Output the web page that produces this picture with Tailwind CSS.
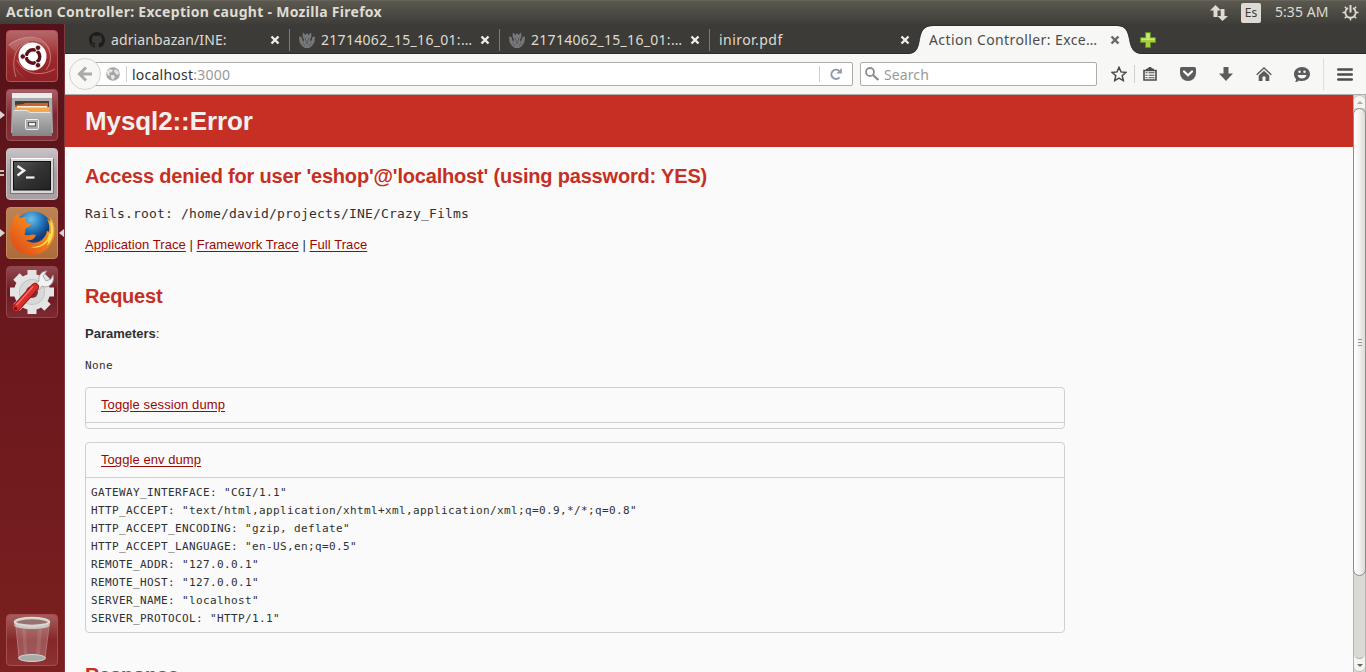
<!DOCTYPE html>
<html lang="en">
<head>
<meta charset="utf-8">
<title>Action Controller: Exception caught</title>
<script src="https://cdn.jsdelivr.net/npm/@tailwindcss/browser@4"></script>
</head>
<body class="w-[1366px] h-[672px] overflow-hidden flex flex-col bg-[#3c3b37] font-['Noto_Sans',sans-serif]">

<svg class="hidden">
  <defs>
    <symbol id="close" viewBox="0 0 10 10"><path d="M1.500 1.500l7 7M8.500 1.500l-7 7" stroke="currentColor" stroke-width="2.400" fill="none"/></symbol>
    <symbol id="flame" viewBox="0 0 16 16"><path d="M4 .5l2.500 2.500L8 1l1.500 2L12 .5 12.500 4 11 8l1 2 1.500-5L16 4.500 15.500 10 13 14l-3 2H6l-3-2L.5 10 0 4.500 2.500 5 4 10l1-2-1.500-4z" fill="#77787a"/><path d="M6 6l2 6 2-6M3.500 11l3 3M12.500 11l-3 3" stroke="#5a5b5e" fill="none"/></symbol>
  </defs>
</svg>

<header class="h-6 shrink-0 flex items-center justify-between pl-1.5 pr-[7px] bg-linear-to-b from-[#5b594f] to-[#3e3d39] border-t border-[#66645a] text-[#dfdbd2]">
  <div class="text-[14px] leading-[22px] -mt-0.5 font-bold tracking-[0.29px] whitespace-nowrap">Action Controller: Exception caught - Mozilla Firefox</div>
  <div class="flex items-center">
    <svg class="w-[18px] h-[18px] mr-[13px]" viewBox="0 0 18 18" fill="#dfdbd2"><path d="M5.500 1L11 6.500H7.500V13h-4V6.500H0zM12.500 17L7.500 12h3.200V5h3.800v7H18z"/></svg>
    <div class="w-5 h-5 rounded-[2px] bg-[#dfdbd2] text-[#3c3b37] text-[12px] leading-5 text-center mr-[14px]">Es</div>
    <div class="text-[14px] leading-[22px] -mt-0.5 tracking-[0.05px] w-[54px] mr-[13px] whitespace-nowrap">5:35 AM</div>
    <svg class="w-[17px] h-[17px]" viewBox="0 0 17 17" fill="none" stroke="#dfdbd2"><path d="M6 4a5.200 5.200 0 1 0 5 0" stroke-width="1.800"/><path d="M8.500 1v7.500" stroke-width="2"/><path d="M.5 8.500h3M13.500 8.500h3M2.800 14.200l2-2M14.200 14.200l-2-2M8.500 16.500v-3M2.800 2.800l2 2M14.200 2.800l-2 2" stroke-width="1.500"/></svg>
  </div>
</header>

<div class="flex flex-1 min-h-0">
  <aside class="w-[65px] shrink-0 flex flex-col gap-[7px] pt-1.5 pb-[6px] pl-1.5 bg-linear-to-b from-[#55121a] via-[#6b181c] to-[#7b2020] border-r border-[#7e3a3f]">
    <div class="relative w-[52px] h-[52px] rounded-[4px] border border-[#b0565a] bg-linear-to-b from-[#b4686b] via-[#a02a2c] to-[#8e2226]">
      <svg class="w-[50px] h-[50px]" viewBox="0 0 50 50" fill="none"><path d="M1 14C12 4 34 4 41 16c4 8 3 16-1 22 8-14 0-28-14-28C14 10 6 18 7 30c1 12 8 16 14 19C10 43 4 30 8 20z" fill="#fff" opacity=".17"/><path d="M2 14C16 3 36 3 42 18c3 9 1 16-3 21M9 46C4 32 7 14 22 11M48 38c-16 9-33 4-38-9" stroke="#e0a8a8" opacity=".6"/><circle cx="25.500" cy="25.500" r="14" fill="#fff"/><circle cx="26" cy="25.500" r="6.800" stroke="#5e1219" stroke-width="3.400"/><path d="M26 25.500h-11M26 25.500l5.500-9.500M26 25.500l5.500 9.500" stroke="#fff" stroke-width="1"/><g fill="#5e1219" stroke="#fff" stroke-width=".8"><circle cx="15.800" cy="25.500" r="2.700"/><circle cx="31" cy="16.800" r="2.700"/><circle cx="31" cy="34.200" r="2.700"/></g></svg>
    </div>
    <div class="relative w-[52px] h-[52px] rounded-[4px] border border-[#9c5157] bg-linear-to-b from-[#aa6068] via-[#7c2630] to-[#82313b]">
      <svg class="w-[50px] h-[50px]" viewBox="0 0 50 50"><defs><linearGradient id="cab" x2="0" y2="1"><stop stop-color="#bdbdbd"/><stop offset="1" stop-color="#858585"/></linearGradient></defs><path d="M5 3h40v4l1 36H4L5 7z" fill="#ababab"/><path d="M5 3h40v5H5z" fill="#ececec"/><path d="M8 11h34v14H8z" fill="#4a3b35"/><path d="M8 15l8-1 2-1h23v12H8z" fill="#c9642e"/><path d="M8 17h34v6H8z" fill="#f2a94e"/><path d="M10 16h30v1.500H10z" fill="#fff3df"/><path d="M6 20h14l3 2h21l1 24H5z" fill="url(#cab)"/><path d="M7 20.500h13l3 2h20" stroke="#e4e4e4" fill="none"/><rect x="18.500" y="29.500" width="13" height="10" rx="1" fill="#aaa" stroke="#f0f0f0"/><rect x="21.500" y="32.500" width="7" height="3.500" fill="#f4f4f4" stroke="#555"/></svg>
      <i class="absolute -left-[7px] top-[21px] border-y-4 border-y-transparent border-l-[5px] border-l-[#ddd3d3]"></i>
    </div>
    <div class="relative w-[52px] h-[52px] rounded-[4px] border border-[#c8bfc1] bg-linear-to-b from-[#c9c3c5] via-[#a79ea2] to-[#aaa0a4]">
      <svg class="w-[50px] h-[50px]" viewBox="0 0 50 50"><defs><linearGradient id="term" x2="1" y2="1"><stop stop-color="#555"/><stop offset=".5" stop-color="#333"/><stop offset="1" stop-color="#222"/></linearGradient></defs><path d="M3.500 9.500h43v35h-43z" fill="#d8d8d8" stroke="#777"/><path d="M4 9.500h42" stroke="#fff"/><rect x="6.500" y="12.500" width="37" height="28.500" fill="url(#term)" stroke="#111"/><path d="M10.500 17l6.500 4.500-6.500 5" stroke="#f2f2f2" stroke-width="2.500" fill="none"/><path d="M19 28.500h8.500" stroke="#f2f2f2" stroke-width="2.200"/></svg>
      <i class="absolute -left-[7px] top-[21px] w-[4px] h-[6px] border-y-2 border-[#cbbcbc]"></i>
    </div>
    <div class="relative w-[52px] h-[52px] rounded-[4px] border border-[#c58a60] bg-linear-to-b from-[#bd8354] to-[#ad6b3a]">
      <svg class="w-[50px] h-[50px]" viewBox="0 0 50 50"><defs><radialGradient id="globe" cx=".45" cy=".2"><stop stop-color="#6bc1ea"/><stop offset=".6" stop-color="#2173b8"/><stop offset="1" stop-color="#123d7c"/></radialGradient><linearGradient id="fox" x1="1" y1="0" x2="0" y2="1"><stop stop-color="#ffd53d"/><stop offset=".35" stop-color="#f58a1f"/><stop offset="1" stop-color="#dc4216"/></linearGradient></defs><circle cx="26" cy="23" r="19.500" fill="url(#globe)"/><path d="M6 12c2-4 4-6 5-7 0 3 1 4 2 5 2-1 5-1 7-1-2 2-2 4 0 6l4 1c-1 3-5 3-6 6 1 2 0 4-1 4 4 3 7-1 12 1-2 5-6 6-10 5 7 6 19 2 21-9 1 0 2 1 2 1 1-5 0-10-2-13 3 2 4 4 5 6 0-3-1-6-3-9 6 6 6 16 5 21-3 11-12 18-22 18C11 47 3 38 3 26c0-6 1-10 3-14z" fill="url(#fox)"/><path d="M43 11c5 8 4 20-3 27 1-3 1-5 1-5-5 6-12 8-17 6 11 0 17-6 18-14l2 1c0-6 0-11-1-15z" fill="#ffe052"/></svg>
      <i class="absolute -left-[7px] top-[21px] border-y-4 border-y-transparent border-l-[5px] border-l-[#ddd3d3]"></i>
      <i class="absolute -right-[7px] top-[21px] border-y-4 border-y-transparent border-r-[5px] border-r-[#ddd3d3]"></i>
    </div>
    <div class="relative w-[52px] h-[52px] rounded-[4px] border border-[#92454b] bg-linear-to-b from-[#91484f] via-[#6b1820] to-[#7b2a33]">
      <svg class="w-[50px] h-[50px]" viewBox="0 0 50 50"><g transform="translate(25 25)"><g fill="#e4e4e4"><g id="teeth"><rect x="-4.500" y="-22" width="9" height="44"/><rect x="-22" y="-4.500" width="44" height="9"/></g><use href="#teeth" transform="rotate(45)"/><circle r="18"/></g><circle r="13" fill="#c4c4c4"/><circle r="12" fill="#d8d8d8"/><circle r="6" fill="#7b2e34"/></g><path d="M28 17l4-3c-1-6 3-10 8-10l-4 5 3 5 5-2 2-4c2 6-2 12-8 12l-3-1-3 4z" fill="#f2f2f2" stroke="#999" stroke-width=".8"/><path d="M9 41L28 20" stroke="#9e1414" stroke-width="8" stroke-linecap="round"/><path d="M9 41L28 20" stroke="#d8302a" stroke-width="6.200" stroke-linecap="round"/><path d="M9.500 38L26 19.500" stroke="#f0716a" stroke-width="1.500"/><circle cx="8.500" cy="41.500" r="1.800" fill="#7d1010"/></svg>
    </div>
    <div class="mt-auto w-[52px] h-[52px] rounded-[4px] border border-[#a2504f] bg-linear-to-b from-[#a75b5b] via-[#842729] to-[#8d3232]">
      <svg class="w-[50px] h-[50px]" viewBox="0 0 50 50"><path d="M9 9l3 34c5 4 21 4 26 0l4-34z" fill="#fff" opacity=".2"/><path d="M9 12l3 31M42 12l-4 31" stroke="#c99" opacity=".6"/><path d="M15 13l2 26h3l-1-26M31 13l-2 26h4l2-26" fill="#fff" opacity=".1"/><ellipse cx="25" cy="43" rx="13.500" ry="3.500" fill="#a7aaa6" stroke="#d7d7d7"/><ellipse cx="25" cy="7" rx="17" ry="4" fill="#9a7171" stroke="#d9d9d3" stroke-width="2.500"/><path d="M7 8c2 5 34 5 36 0l-.5 3c-3 4-32 4-35 0z" fill="#c9c9c3"/></svg>
    </div>
  </aside>

  <main class="flex-1 min-w-0 flex flex-col bg-[#f7f7f5]">
    <nav class="relative h-[30px] shrink-0 flex pl-[14px] bg-[#3c3b37] border-b border-[#2c2b28] text-[14px] text-[#dfdbd2]">
      <div class="w-[210px] h-full flex items-center pt-0.5 pl-[10px] pr-[9px]">
        <svg class="w-4 h-4 mr-1.5" viewBox="0 0 16 16" fill="#1d1d1d"><path d="M8 0C3.580 0 0 3.580 0 8c0 3.540 2.290 6.530 5.470 7.590.4.070.55-.17.55-.38 0-.19-.01-.82-.01-1.490-2.010.37-2.530-.49-2.690-.94-.09-.23-.48-.94-.82-1.130-.28-.15-.68-.52-.01-.53.63-.01 1.080.58 1.230.82.72 1.210 1.870.87 2.330.66.07-.52.28-.87.51-1.070-1.780-.2-3.640-.89-3.640-3.950 0-.87.31-1.590.82-2.150-.08-.2-.36-1.020.08-2.120 0 0 .67-.21 2.200.82.64-.18 1.320-.27 2-.27s1.360.09 2 .27c1.530-1.040 2.200-.82 2.200-.82.44 1.100.16 1.920.08 2.120.51.56.82 1.270.82 2.150 0 3.070-1.870 3.750-3.650 3.950.29.25.54.73.54 1.480 0 1.070-.01 1.930-.01 2.200 0 .21.15.46.55.38A8.010 8.010 0 0 0 16 8c0-4.420-3.580-8-8-8z"/></svg>
        <span class="flex-1 whitespace-nowrap tracking-[0.1px]">adrianbazan/INE:</span>
        <svg class="w-2.5 h-2.5 text-[#f0eee8]"><use href="#close"/></svg>
      </div>
      <div class="w-px h-[22px] mt-[5px] bg-[#7d7b76]"></div>
      <div class="w-[209px] h-full flex items-center pt-0.5 pl-[9px] pr-[9px]">
        <svg class="w-4 h-4 mr-1.5"><use href="#flame"/></svg>
        <span class="flex-1 whitespace-nowrap tracking-[0.3px]">21714062_15_16_01:…</span>
        <svg class="w-2.5 h-2.5 text-[#f0eee8]"><use href="#close"/></svg>
      </div>
      <div class="w-px h-[22px] mt-[5px] bg-[#7d7b76]"></div>
      <div class="w-[209px] h-full flex items-center pt-0.5 pl-[9px] pr-[9px]">
        <svg class="w-4 h-4 mr-1.5"><use href="#flame"/></svg>
        <span class="flex-1 whitespace-nowrap tracking-[0.3px]">21714062_15_16_01:…</span>
        <svg class="w-2.5 h-2.5 text-[#f0eee8]"><use href="#close"/></svg>
      </div>
      <div class="w-px h-[22px] mt-[5px] bg-[#7d7b76]"></div>
      <div class="w-[209px] h-full flex items-center pt-0.5 pl-[9px] pr-[9px]">
        <span class="flex-1 whitespace-nowrap tracking-[0.45px]">iniror.pdf</span>
        <svg class="w-2.5 h-2.5 text-[#f0eee8]"><use href="#close"/></svg>
      </div>
      <div class="relative w-[210px] h-full flex items-center pt-0.5 pl-[10px] pr-[9px] text-[#4c4c4c]">
        <svg class="absolute -left-[12px] top-0 w-[236px] h-[30px]" viewBox="0 0 236 30"><path d="M0 30c10 0 11-6 12.500-14S16 2 26 2h184c9 0 11 6 12.500 14S226 30 236 30z" fill="#f7f7f5" /><path d="M0 29.500c10 0 11-6 12.500-14S16 1.500 26 1.500h184c9 0 11 6 12.500 14S226 29.500 236 29.500" fill="none" stroke="#2c2b28" stroke-width=".8"/></svg>
        <span class="relative flex-1 whitespace-nowrap tracking-[0.4px]">Action Controller: Exce…</span>
        <svg class="relative w-2.5 h-2.5 text-[#666]"><use href="#close"/></svg>
      </div>
      <svg class="w-4 h-4 ml-[11px] mt-2" viewBox="0 0 16 16"><path d="M5.500.5h5v5h5v5h-5v5h-5v-5h-5v-5h5z" fill="#a9d03c" stroke="#5f9022"/><path d="M6.500 1.500h3v5h5v1.500h-13V6.500h5z" fill="#cbe67a"/></svg>
    </nav>

    <div class="h-[41px] shrink-0 flex items-center pl-1 border-b border-[#b0aea8] text-[14px] text-[#555]">
      <div class="relative z-10 w-8 h-8 rounded-full border border-[#d4d3cf] bg-[#f7f7f5] flex items-center justify-center shrink-0">
        <svg class="w-4 h-4" viewBox="0 0 16 16" fill="none" stroke="#aaaaa7" stroke-width="3"><path d="M9 1.500L2.500 8 9 14.500M3 8h12"/></svg>
      </div>
      <div class="w-[768px] h-6 -ml-4 flex items-center pl-[20px] bg-white border border-[#aeada7] rounded-[2px] shrink-0">
        <svg class="w-[14px] h-[14px]" viewBox="0 0 14 14"><circle cx="7" cy="7" r="6.800" fill="#a4a4a2"/><path d="M1 4l3-2 3 1-1 2-3 1 1 2-1 1-2-2zM9 2l3 2 1 3-2 1-2-2-1-2zM5 8l3 0 1 2-2 3-2-2z" fill="#e4e4e2"/></svg>
        <div class="w-px h-4 ml-[6px] mr-[5px] bg-[#cfcfcf]"></div>
        <div class="flex-1 text-[#999] whitespace-nowrap tracking-[0.24px]"><span class="text-[#333]">localhost</span>:3000</div>
        <div class="w-px h-4 bg-[#cfcfcf]"></div>
        <svg class="w-3 h-3 ml-[10px] mr-[10px]" viewBox="0 0 12 12"><path d="M9.500 9.300A4.600 4.600 0 1 1 9 2.800" fill="none" stroke="#8c99a7" stroke-width="2"/><path d="M11.800 0v5.500H6.300z" fill="#8c99a7"/></svg>
      </div>
      <div class="w-[237px] h-6 ml-[7px] flex items-center pl-1 bg-white border border-[#aeada7] rounded-[2px] shrink-0">
        <svg class="w-[14px] h-[14px] mr-[5px]" viewBox="0 0 14 14" fill="none" stroke="#8f8f8d"><circle cx="5" cy="5" r="4" stroke-width="1.800"/><path d="M8 8l5.300 5" stroke-width="2.300"/></svg>
        <span class="text-[#999] tracking-[0.1px]">Search</span>
      </div>
      <svg class="w-4 h-4 ml-[14px]" viewBox="0 0 16 16"><path d="M8 1.400l2 4.500 4.900.5-3.700 3.300 1.100 4.900L8 12.100l-4.300 2.500 1.100-4.900L1.100 6.400 6 5.900z" fill="none" stroke="#4c4c4c" stroke-width="1.500"/></svg>
      <div class="w-px h-[18px] ml-[7px] bg-[#d0d0ce]"></div>
      <svg class="w-[14px] h-[14px] ml-[8px]" viewBox="0 0 14 14"><path d="M1 3.500h12v9.500H1z" fill="#f7f7f5" stroke="#4c4c4c" stroke-width="1.600"/><path d="M3.500 3.500V2H5l1-1.500h2L9 2h1.500v1.500z" fill="#4c4c4c" stroke="#4c4c4c"/><path d="M2.500 5.800h2M2.500 8.300h2M2.500 10.800h2M5.500 5.800h6M5.500 8.300h6M5.500 10.800h6" stroke="#4c4c4c" stroke-width="1.100"/></svg>
      <svg class="w-4 h-[14px] ml-[23px]" viewBox="0 0 16 14"><path d="M1.500 0h13Q16 0 16 1.500V6a8 8 0 0 1-16 0V1.500Q0 0 1.500 0z" fill="#5c5c5c"/><path d="M4 4.500l4 3.800 4-3.800" fill="none" stroke="#fff" stroke-width="2.200" stroke-linecap="round"/></svg>
      <svg class="w-[14px] h-[14px] ml-[23px]" viewBox="0 0 14 14"><path d="M4.500 0h5v6.500H14l-7 7.500-7-7.500h4.500z" fill="#5c5c5c"/></svg>
      <svg class="w-4 h-[14px] ml-[23px]" viewBox="0 0 16 14"><path d="M.7 7.700L8 1l7.300 6.700" fill="none" stroke="#5c5c5c" stroke-width="1.500"/><path d="M8 3.800l5.300 4.800V14H9.500V9.500h-3V14H2.700V8.600z" fill="#5c5c5c"/></svg>
      <svg class="w-4 h-[15px] ml-[22px]" viewBox="0 0 16 15"><path d="M8 0c4.500 0 8 3 8 7s-3.500 7-8 7c-1 0-2-.1-3-.5C4 14.500 2 15 1 15c1-1 1-2 1-3C.7 10.700 0 9 0 7c0-4 3.500-7 8-7z" fill="#5c5c5c"/><path d="M3.500 8h9c-.5 2.500-2.500 3.500-4.500 3.500S4 10.500 3.500 8z" fill="#f7f7f5"/><circle cx="5.500" cy="4.700" r="1.200" fill="#f7f7f5"/><circle cx="10.500" cy="4.700" r="1.200" fill="#f7f7f5"/></svg>
      <div class="w-px h-8 ml-[13px] bg-[#dededc]"></div>
      <svg class="w-4 h-[13px] ml-[13px]" viewBox="0 0 16 13"><path d="M1.300 1.500h13.400M1.300 6.500h13.400M1.300 11.500h13.400" stroke="#4c4c4c" stroke-width="2.600" stroke-linecap="round"/></svg>
    </div>

    <div class="flex-1 min-h-0 flex">
      <section class="flex-1 min-w-0 overflow-hidden bg-[#fafafa] text-[#303030] text-[13px] leading-[18px] font-['Liberation_Sans',sans-serif]">
        <div class="h-[52px] pl-5 bg-[#c52f24] text-[#f0f0f0]">
          <h1 class="text-[26px] leading-[52px] font-bold tracking-[-0.1px]">Mysql2::Error</h1>
        </div>
        <div class="pl-5">
          <h2 class="mt-[17px] text-[20px] leading-[25px] font-bold tracking-[-0.185px] text-[#c52f24] whitespace-nowrap">Access denied for user 'eshop'@'localhost' (using password: YES)</h2>
          <div class="mt-4 font-['DejaVu_Sans_Mono',monospace] tracking-[0.174px]">Rails.root: /home/david/projects/INE/Crazy_Films</div>
          <div class="mt-[13px] whitespace-nowrap tracking-[0.065px]"><a class="text-[#980905] underline underline-offset-2">Application Trace</a> | <a class="text-[#980905] underline underline-offset-2">Framework Trace</a> | <a class="text-[#980905] underline underline-offset-2">Full Trace</a></div>
          <h2 class="mt-[30px] text-[20px] leading-[25px] font-bold tracking-[-0.22px] text-[#c52f24]">Request</h2>
          <p class="mt-4"><b>Parameters</b>:</p>
          <pre class="mt-[14px] text-[11px] leading-[18px] tracking-[0.378px] font-['DejaVu_Sans_Mono',monospace]">None</pre>
          <div class="mt-3 w-[980px] h-[42px] border border-[#d0d0d0] rounded-[4px]">
            <div class="h-[35px] pl-[15px] pt-[8px] border-b border-[#d0d0d0]"><a class="text-[#980905] underline underline-offset-2 tracking-[0.1px]">Toggle session dump</a></div>
          </div>
          <div class="mt-[13px] w-[980px] h-[191px] border border-[#d0d0d0] rounded-[4px]">
            <div class="h-[35px] pl-[15px] pt-[8px] border-b border-[#d0d0d0]"><a class="text-[#980905] underline underline-offset-2 tracking-[0.07px]">Toggle env dump</a></div>
            <pre class="pl-[5px] pt-[6px] text-[11px] leading-[18px] tracking-[0.378px] font-['DejaVu_Sans_Mono',monospace]">GATEWAY_INTERFACE: "CGI/1.1"
HTTP_ACCEPT: "text/html,application/xhtml+xml,application/xml;q=0.9,*/*;q=0.8"
HTTP_ACCEPT_ENCODING: "gzip, deflate"
HTTP_ACCEPT_LANGUAGE: "en-US,en;q=0.5"
REMOTE_ADDR: "127.0.0.1"
REMOTE_HOST: "127.0.0.1"
SERVER_NAME: "localhost"
SERVER_PROTOCOL: "HTTP/1.1"</pre>
          </div>
          <h2 class="mt-[30px] text-[20px] leading-[25px] font-bold tracking-[-0.22px] text-[#c52f24]">Response</h2>
        </div>
      </section>
      <div class="w-[13px] shrink-0 flex flex-col bg-[#dad9d6] border-x border-[#b5b3ac]">
        <div class="h-[13px] bg-[#f4f4f2] rounded-t-full flex items-center justify-center border-t border-[#c0beb8]"><i class="border-x-[3px] border-x-transparent border-b-[3px] border-b-[#aaa]"></i></div>
        <div class="h-[468px] -mx-px rounded-full border border-[#8f8e89] bg-linear-to-r from-white via-[#f1f1ef] to-[#dcdbd8] flex flex-col items-center justify-center gap-[2px]">
          <i class="w-[4px] h-px bg-[#999]"></i><i class="w-[4px] h-px bg-[#999]"></i><i class="w-[4px] h-px bg-[#999]"></i>
        </div>
        <div class="flex-1 bg-[#f4f4f2]"><div class="h-full bg-[#dad9d6] rounded-b-full border-b border-[#b5b3ac]"></div></div>
        <div class="h-[13px] bg-[#f4f4f2] rounded-b-full flex items-center justify-center border-b border-[#c0beb8]"><i class="border-x-[3px] border-x-transparent border-t-[3px] border-t-[#666]"></i></div>
      </div>
    </div>
  </main>
</div>
</body>
</html>
